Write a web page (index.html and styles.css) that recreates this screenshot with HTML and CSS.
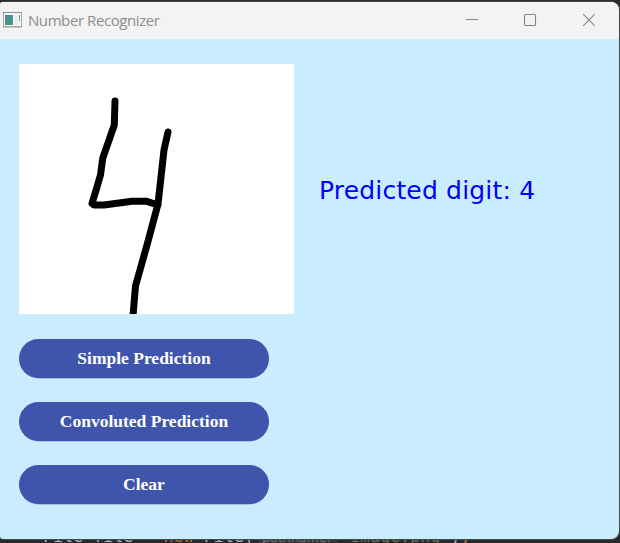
FILE: index.html
```html
<!DOCTYPE html>
<html lang="en">
<head>
<meta charset="utf-8">
<title>Number Recognizer</title>
<link rel="stylesheet" href="styles.css">
</head>
<body>
<div class="code"><span>File file = </span><span class="keyword">new</span><span> File(</span><span class="hint">pathname:</span><span class="string">"image.png"</span><span>)</span><span class="keyword">;</span></div>
<main class="window">
  <header class="titlebar">
    <svg class="app-icon" width="19" height="16" viewBox="0 0 19 16">
      <defs><linearGradient id="g" x1="0" y1="0" x2="1" y2="1"><stop offset="0" stop-color="#4784a8"/><stop offset="1" stop-color="#4aa078"/></linearGradient></defs>
      <rect x=".5" y=".5" width="18" height="14" fill="#f6f8fa" stroke="#a2a7b2"/>
      <path d="M0 .5h19" stroke="#868d9f"/>
      <path d="M0 15.5h19" stroke="#c8c8cc"/>
      <rect x="2" y="3" width="8" height="10" fill="url(#g)"/>
      <rect x="11" y="3" width="4" height="10" fill="#e7edf0"/>
      <rect x="16" y="3" width="1" height="6" fill="#58a68b"/>
    </svg>
    <h1 class="title">Number Recognizer</h1>
    <svg class="controls" width="130" height="14" viewBox="0 0 130 14" fill="none" stroke="#858585" stroke-width="1.1">
      <path d="M0 6.500h12"/>
      <rect x="58.500" y="1.500" width="11" height="11" rx="1"/>
      <path d="M117.200 1.200l11.600 11.600M128.800 1.200L117.200 12.800"/>
    </svg>
  </header>
  <section class="content">
    <div class="top">
      <svg class="canvas" width="275" height="250" viewBox="19 64 275 250">
        <path d="M115 101L114.300 125L102.800 158L100.500 175L97 187L92 203.500L94 205L104 205L119 203L132 201.200L146 201.200L158 205M168 132L164 150L161 177L158 204L147 245L135.500 286L132.800 318"/>
      </svg>
      <p class="result">Predicted digit: 4</p>
    </div>
    <button class="action">Simple Prediction</button>
    <button class="action">Convoluted Prediction</button>
    <button class="action">Clear</button>
  </section>
</main>
</body>
</html>
```
FILE: styles.css
```css
* {
  box-sizing: border-box;
}

body {
  margin: 0;
  width: 620px;
  height: 543px;
  padding-top: 2px;
  overflow: hidden;
  position: relative;
  background: #29292b;
}

.window {
  position: relative;
  width: 619px;
  height: 537px;
  overflow: hidden;
  border-radius: 3px 8px 8px 3px;
  background: #c9edff;
  box-shadow: 0 0 0 1px #45494c;
}

.titlebar {
  display: flex;
  align-items: center;
  height: 37px;
  padding: 0 23px 2px 3px;
  background: #f3f3f3;
}

.title {
  margin: 0 auto 0 6px;
  font: 400 15px/20px "Open Sans", "Noto Sans", sans-serif;
  letter-spacing: -0.42px;
  color: #8c8c8c;
}

.content {
  display: flex;
  flex-direction: column;
  align-items: flex-start;
  gap: 24px;
  padding: 25px 19px;
}

.top {
  display: flex;
  align-items: center;
  gap: 25px;
  margin-bottom: 1px;
}

.canvas {
  display: block;
  background: #fff;
}

.canvas path {
  fill: none;
  stroke: #000;
  stroke-width: 7;
  stroke-linecap: round;
  stroke-linejoin: round;
}

.result {
  margin: 0;
  padding-top: 3px;
  font: 25px/30px "DejaVu Sans", Verdana, sans-serif;
  letter-spacing: 0.18px;
  color: #00f;
  white-space: nowrap;
}

.action {
  width: 250px;
  height: 39px;
  padding: 0 0 2px;
  border: 0;
  border-radius: 20px;
  background: #3f54ab;
  box-shadow: 0 1px 0 -0.5px #7f96d0;
  color: #fff;
  font: bold 17.5px/20px "Liberation Serif", "Times New Roman", serif;
}

.code {
  position: absolute;
  left: 43px;
  top: 526px;
  display: flex;
  align-items: baseline;
  font: 16.7px/20px "DejaVu Sans Mono", monospace;
  white-space: pre;
  color: #a9b7c6;
}

.keyword {
  color: #b86d30;
}

.hint {
  width: 80px;
  margin: 0 2px 0 4px;
  padding: 0 4px;
  background: #343638;
  font: 13.5px/20px "Open Sans", sans-serif;
  color: #74797c;
}

.string {
  color: #60794f;
}
```
